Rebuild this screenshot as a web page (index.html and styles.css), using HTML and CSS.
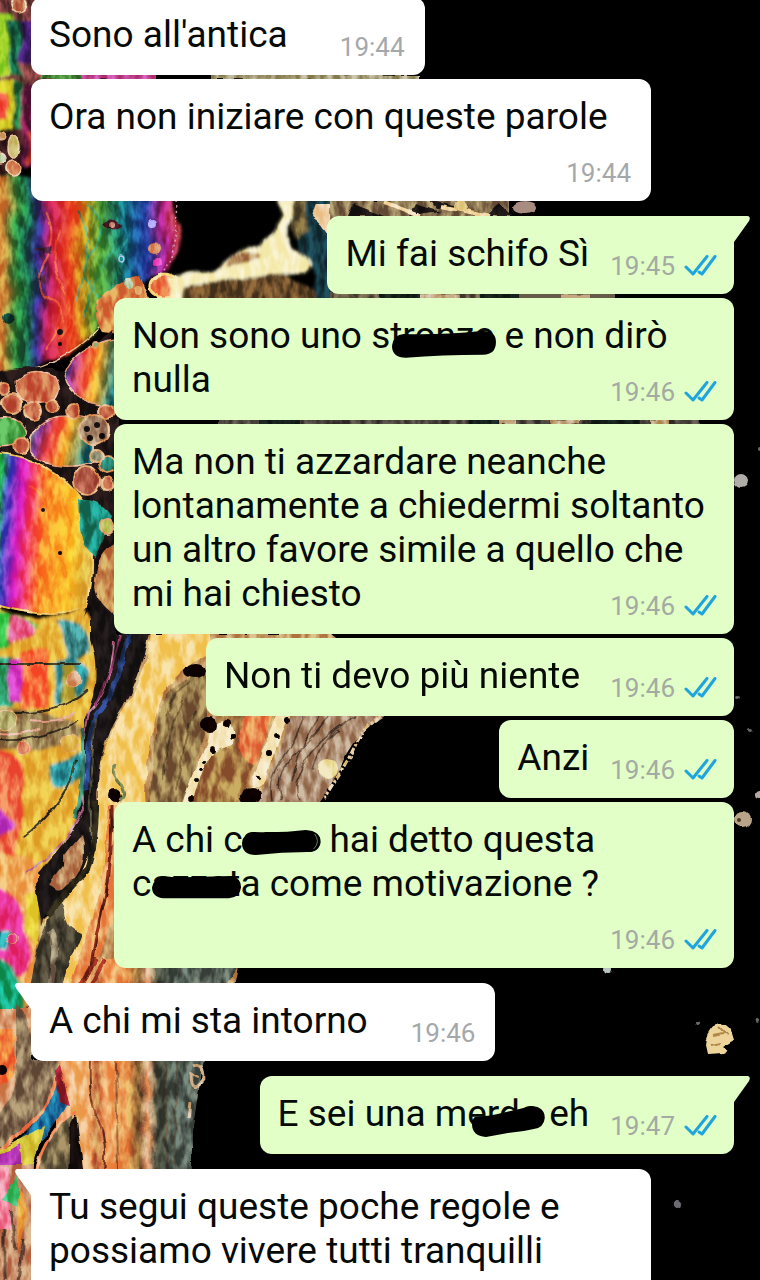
FILE: index.html
```
<!DOCTYPE html>
<html lang="it">
<head>
    <meta charset="UTF-8">
    <meta name="viewport" content="width=device-width, initial-scale=1.0">
    <title>Chat</title>
    <link rel="stylesheet" href="styles.css">
</head>
<body>
    <svg class="wallpaper" viewBox="0 0 760 1280" preserveAspectRatio="xMinYMin slice" aria-hidden="true">
        <defs>
            <linearGradient id="rainbow" x1="0" x2="1" y1="0" y2="0">
                <stop offset="0" stop-color="#f58a3c"/>
                <stop offset=".12" stop-color="#d0903c"/>
                <stop offset=".18" stop-color="#2c8a3c"/>
                <stop offset=".24" stop-color="#1c6a4c"/>
                <stop offset=".29" stop-color="#2e2a86"/>
                <stop offset=".35" stop-color="#c81e50"/>
                <stop offset=".45" stop-color="#ee4a24"/>
                <stop offset=".52" stop-color="#d0901c"/>
                <stop offset=".6" stop-color="#4c9c34"/>
                <stop offset=".7" stop-color="#127078"/>
                <stop offset=".84" stop-color="#2444a8"/>
                <stop offset=".93" stop-color="#b0207e"/>
                <stop offset="1" stop-color="#d4504a"/>
            </linearGradient>
            <linearGradient id="neon" x1="0" x2="1" y1="0" y2=".12">
                <stop offset="0" stop-color="#3ed838"/>
                <stop offset=".12" stop-color="#22b050"/>
                <stop offset=".2" stop-color="#4a48c8"/>
                <stop offset=".32" stop-color="#d81ec0"/>
                <stop offset=".44" stop-color="#f5486a"/>
                <stop offset=".56" stop-color="#f98a2c"/>
                <stop offset=".85" stop-color="#fbc62c"/>
                <stop offset="1" stop-color="#e0b440"/>
            </linearGradient>
            <linearGradient id="drop" x1="0" x2="1" y1="0" y2=".2">
                <stop offset="0" stop-color="#3a9a5c"/>
                <stop offset=".2" stop-color="#8a3a9c"/>
                <stop offset=".4" stop-color="#ee4a48"/>
                <stop offset=".65" stop-color="#f5b030"/>
                <stop offset="1" stop-color="#14707c"/>
            </linearGradient>
            <linearGradient id="sand" gradientUnits="userSpaceOnUse" x1="56" x2="200" y1="0" y2="0">
                <stop offset="0" stop-color="#e87c48"/>
                <stop offset=".12" stop-color="#f2bc80"/>
                <stop offset=".24" stop-color="#f0b070"/>
                <stop offset=".28" stop-color="#c07040"/>
                <stop offset=".34" stop-color="#f2a868"/>
                <stop offset=".5" stop-color="#e89850"/>
                <stop offset=".58" stop-color="#7c5830"/>
                <stop offset=".64" stop-color="#f0b488"/>
                <stop offset=".7" stop-color="#4a4c3c"/>
                <stop offset=".82" stop-color="#56645a"/>
                <stop offset="1" stop-color="#5c665c"/>
            </linearGradient>
            <filter id="wave" x="-5%" y="-5%" width="110%" height="110%">
                <feTurbulence type="fractalNoise" baseFrequency=".03" numOctaves="2" seed="4"/>
                <feDisplacementMap in="SourceGraphic" scale="14" xChannelSelector="R" yChannelSelector="G"/>
                <feGaussianBlur stdDeviation="1.4"/>
            </filter>
            <filter id="ripple" x="-5%" y="-5%" width="110%" height="110%">
                <feTurbulence type="fractalNoise" baseFrequency=".06" numOctaves="2" seed="9"/>
                <feDisplacementMap in="SourceGraphic" scale="6" xChannelSelector="R" yChannelSelector="G"/>
                <feGaussianBlur stdDeviation=".7"/>
            </filter>
            <filter id="mottle" x="0" y="0" width="100%" height="100%" color-interpolation-filters="sRGB">
                <feTurbulence type="fractalNoise" baseFrequency=".12 .05" numOctaves="3" seed="21" result="noise"/>
                <feColorMatrix values="3 0 0 0 -1.05  3 0 0 0 -1.05  3 0 0 0 -1.05  0 0 0 0 1"/>
                <feComposite in2="SourceGraphic" operator="in"/>
            </filter>
        </defs>
        <rect width="760" height="1280" fill="#000"/>

        <!-- top left oil film -->
        <g filter="url(#wave)">
            <path d="M-20-20H60V90H-20Z" fill="#7a3c3c"/>
            <path d="M-20 14H14V80H-20Z" fill="#a0d42c"/>
            <path d="M8 20H20V80H8Z" fill="#186a48"/>
            <path d="M20 20H50V64H20Z" fill="#3e1a66"/>
            <path d="M-20 84H14V130H-20Z" fill="#d8d02c"/>
            <path d="M-20 94H6V118H-20Z" fill="#f0503c"/>
            <path d="M12 84H20V130H12Z" fill="#1e7a44"/>
            <path d="M20 84H44V166H20Z" fill="#7a1c4c"/>
            <path d="M-20 130H20V178H-20Z" fill="#3a1c1c"/>
            <path d="M26 132H44V164H26Z" fill="#b83828"/>
            <path d="M-20 178Q90 168 168 190Q190 236 168 272Q120 290 104 324Q62 372 0 372H-20Z" fill="url(#rainbow)"/>
        </g>
        <g fill="none" stroke="#e8c8a0" stroke-width="1.5" filter="url(#ripple)">
            <path d="M174 196Q184 244 160 276" stroke="#dcaec4" stroke-dasharray="2 3"/>
            <path d="M0 374Q60 370 98 328T140 300"/>
            <ellipse cx="14" cy="147" rx="6" ry="11" fill="#c8b868"/>
            <circle cx="0" cy="158" r="6" fill="#a8c088"/>
            <circle cx="13" cy="168" r="7" fill="#d88a5c"/>
            <circle cx="19" cy="4" r="8" fill="#c47a54"/>
            <circle cx="1" cy="137" r="4" fill="#d8b088"/>
        </g>
        <g filter="url(#ripple)">
            <g fill="none" stroke="#2aa088" stroke-opacity=".6" stroke-width="2">
                <path d="M88 206Q112 224 92 252T104 300M108 202Q128 232 112 252T84 318M128 240Q112 262 122 276M78 210Q98 248 76 300"/>
            </g>
            <g fill="none" stroke="#f57038" stroke-opacity=".7" stroke-width="2">
                <path d="M46 212Q58 236 44 262T52 300T46 350M60 230Q48 260 64 290T58 340"/>
            </g>
            <path d="M102 224Q112 212 122 226Q112 232 102 224Z" fill="#4c1c28"/>
            <circle cx="112" cy="224" r="3" fill="#d09080"/>
            <circle cx="152" cy="223" r="4" fill="#bcb4ff"/>
            <circle cx="154" cy="249" r="6" fill="#e09a70"/>
            <circle cx="157" cy="262" r="4" fill="#f04ac0"/>
            <circle cx="122" cy="259" r="3" fill="none" stroke="#9cb8e0" stroke-width="1.5"/>
            <path d="M32 250L52 246L50 254ZM38 278L46 272L44 284Z" fill="#4c2438"/>
            <circle cx="8" cy="318" r="6" fill="#0a4030"/>
            <path d="M98 300Q110 288 126 280L140 276L150 300H120V334L102 332Q92 316 98 300Z" fill="#dc8848"/>
            <circle cx="128" cy="284" r="5" fill="#b0c8a0"/><circle cx="138" cy="290" r="4" fill="#e8c090"/>
            <ellipse cx="165" cy="286" rx="15" ry="12" fill="#e8683c" stroke="#f8d880" stroke-width="3"/>
        </g>

        <!-- pale branch under the second bubble -->
        <g filter="url(#wave)">
            <path d="M300 196H336V306H300Q330 280 306 262Q290 240 300 196Z" fill="#173a44"/>
            <path d="M276 190H294Q300 214 290 226Q284 238 296 250Q316 262 306 274L240 284Q200 288 186 306H168Q176 286 168 276L214 270Q232 248 262 246Q276 228 284 214Z" fill="#f7efc0"/>
            <path d="M188 288Q236 274 292 278L316 290V306H180Z" fill="#6c4e2c"/>
            <path d="M226 262Q234 248 262 252Q248 264 226 266Z" fill="#b48a5c"/>
            <path d="M294 200H306V230L296 238Q290 228 296 216Z" fill="#6c5c34"/>
        </g>
        <g filter="url(#ripple)">
            <path d="M316 204H340V236H330Q322 222 312 216Z" fill="#f0d0a8"/>
            <path d="M330 200H510V222H330Z" fill="#8e7854"/>
            <path d="M352 204L384 216H348ZM416 204L440 212L410 216ZM500 204L512 216H486ZM430 200L460 206L436 208Z" fill="#1c1414"/>
            <path d="M384 202L420 216M440 206L490 216" stroke="#f4dcae" stroke-width="4"/>
            <circle cx="461" cy="206" r="6" fill="#e8d49c"/><ellipse cx="525" cy="207" rx="12" ry="6" fill="#a88c80"/>
            <path d="M330 292H615V302H330Z" fill="#655a44"/>
            <path d="M220 418H700V428H220Z" fill="#4c443c"/>
            <path d="M380 292H420V302H380ZM480 292H520V302H480ZM260 418H300V428H260ZM470 418H510V428H470ZM590 418H640V428H590Z" fill="#16201c"/>
            <path d="M420 297H460M560 297H590M500 422H516M550 422H580M650 422H670" stroke="#c4a880" stroke-width="5"/>
        </g>
        <g filter="url(#ripple)" stroke-width="6">
            <path d="M40 76L80 78" stroke="#4c8c3c"/>
            <path d="M80 76L156 78" stroke="#c44a98"/>
            <path d="M212 76L420 78" stroke="#a8a07c"/>
        </g>

        <!-- bubbles in the middle left -->
        <g filter="url(#ripple)">
            <path d="M-10 374Q40 360 66 374L112 330L130 600H-10Z" fill="#241414"/>
            <path d="M64 376Q74 346 120 338V406Q76 408 64 376Z" fill="url(#drop)" stroke="#e8b090" stroke-width="1.5"/>
            <path d="M30 438Q40 416 66 416H82Q96 420 94 462Q52 474 30 452Z" fill="url(#drop)" stroke="#e8b090" stroke-width="1.5"/>
            <path d="M-10 420Q22 412 26 434Q20 450-10 446Z" fill="#4ea84c" stroke="#e8b090" stroke-width="1.5"/>
            <path d="M16 380Q34 366 56 378Q64 392 52 402Q30 406 18 396Z" fill="#d0704c" stroke="#e8b090" stroke-width="1.5"/>
            <path d="M-10 452Q50 456 82 500Q100 560 86 606Q60 622 0 606H-10Z" fill="url(#neon)" stroke="#f0cc70" stroke-width="2"/>
            <path d="M78 500Q100 498 112 516L96 556Q84 550 80 530Z" fill="#1e8e7c"/>
            <path d="M28 486Q50 496 46 520T60 560T44 600M60 490Q74 520 66 550T74 600M40 470Q64 490 62 520" fill="none" stroke="#f8a030" stroke-opacity=".6" stroke-width="2"/>
        </g>
        <g fill="#c86848" stroke="#e4ac78" stroke-width="2" filter="url(#ripple)">
            <circle cx="12" cy="404" r="10"/><circle cx="33" cy="411" r="9"/><circle cx="53" cy="406" r="6"/>
            <circle cx="73" cy="411" r="7"/><circle cx="107" cy="411" r="8"/><circle cx="21" cy="446" r="7"/>
            <circle cx="94" cy="430" r="15" fill="#a8886c"/><circle cx="86" cy="480" r="14" fill="#b45c48"/>
            <circle cx="108" cy="464" r="9" fill="#2a8874"/><circle cx="107" cy="484" r="6"/>
            <circle cx="107" cy="526" r="7" fill="#c0c460"/><circle cx="97" cy="456" r="6" fill="#8c8c70"/>
            <circle cx="96" cy="345" r="3" fill="#8cc088"/><circle cx="4" cy="388" r="6"/>
        </g>
        <g fill="#181010">
            <circle cx="87" cy="429" r="3"/><circle cx="97" cy="425" r="3"/><circle cx="90" cy="438" r="3"/><circle cx="102" cy="436" r="3"/>
            <circle cx="60" cy="553" r="2"/><circle cx="43" cy="510" r="2"/><circle cx="60" cy="332" r="3"/><circle cx="60" cy="344" r="2"/>
        </g>

        <!-- lower left colour pool -->
        <g filter="url(#wave)">
            <path d="M-20 600Q60 630 82 600Q104 640 96 700L88 770Q96 810 60 850Q36 876 0 900H-20Z" fill="#e8b83c"/>
            <path d="M-20 612Q24 606 38 624Q30 644-20 650Z" fill="#38c84c"/>
            <path d="M12 612Q40 616 34 636L10 644Z" fill="#e85c8c"/>
            <path d="M58 620Q84 612 90 650L70 666Z" fill="#3c8c8c"/>
            <path d="M-20 656H12V706H-20Z" fill="#30a878"/>
            <path d="M8 658H24V700H8Z" fill="#d83cc8"/>
            <path d="M22 652H48V708H22Z" fill="#f8703c"/>
            <path d="M54 664Q76 650 88 670Q88 700 56 706Z" fill="#2a98a0"/>
            <path d="M62 664H74V704H62Z" fill="#c0b040"/>
            <path d="M-20 706Q60 708 84 730L72 748H-20Z" fill="#a08858"/>
            <path d="M-20 744Q16 744 24 780L14 870H-20Z" fill="#f0704c"/>
            <path d="M52 766L82 752Q84 790 56 788Z" fill="#2a949c"/>
            <path d="M-20 804Q12 810 14 826L-20 850Z" fill="#c43cc8"/>
            <path d="M-20 856Q20 846 44 868L38 990Q20 1030-20 1020Z" fill="#f0b060"/>
            <path d="M-20 884Q24 890 26 930L28 970Q0 990-20 950Z" fill="#e8308c"/>
            <path d="M26 896L44 890L36 950L26 930Z" fill="#e8d43c"/>
            <path d="M-20 930H10V950H-20Z" fill="#2ca0a8"/>
            <path d="M-20 950Q14 956 24 990L22 1010Q0 1024-20 1014Z" fill="#18a878"/>
        </g>
        <g filter="url(#ripple)">
            <path d="M90 590L116 600V634H160Q140 680 136 716Q106 740 100 800Q104 850 84 880Q50 910 42 920L36 884Q60 850 78 822Q86 740 84 720Q104 680 90 640Z" fill="#1c1614"/>
            <path d="M94 586Q98 546 120 540V620Q96 604 94 586Z" fill="#c88a50"/>
            <path d="M84 616Q100 570 94 560Q110 545 116 530L118 524V536Q92 556 92 600Z" fill="#181010"/>
            <path d="M114 640Q112 690 88 712Q78 760 84 810Q64 850 24 874" fill="none" stroke="#c88aa4" stroke-width="2"/>
            <path d="M128 634Q118 690 96 714Q86 750 86 790" fill="none" stroke="#283c78" stroke-width="5"/>
            <path d="M120 634Q112 676 94 706" fill="none" stroke="#8c3464" stroke-width="2"/>
            <path d="M82 728Q86 780 76 820" fill="none" stroke="#3c8c74" stroke-width="4"/>
            <path d="M96 720Q86 800 92 850" fill="none" stroke="#5c5840" stroke-width="2"/>
            <path d="M0 712Q60 718 88 690M0 740Q40 742 78 720M0 664H80M76 760Q66 806 24 836" fill="none" stroke="#383020" stroke-width="2"/>
            <path d="M30 720Q60 724 76 712M0 734Q20 736 40 728" fill="none" stroke="#e8b0a0" stroke-width="2"/>
            <g fill="#d87858" stroke="#f0b888"><circle cx="6" cy="720" r="11" fill="#a8a060"/><circle cx="24" cy="748" r="7"/><circle cx="70" cy="744" r="9" fill="#e0b850"/><circle cx="74" cy="680" r="8" fill="#d8a078"/><circle cx="12" cy="938" r="5" fill="#e84c98"/></g>
            <path d="M150 634H330L420 700V790L336 806Q260 900 238 968L230 1004H60L40 1000Q22 1000 44 920Q92 880 98 810Q94 750 120 712Q140 680 150 634Z" fill="#c69a64"/>
            <path d="M152 634H212V652Q168 670 156 716Q142 780 146 806H120V880L90 980 66 1010Q44 1020 40 990L46 920Q92 880 98 810Q96 750 122 712Q144 680 152 634Z" fill="#f5d27c"/>
            <path d="M108 806H120V900L84 1000H66Q84 940 98 900Q108 860 108 806Z" fill="#ec9c5c"/>
            <path d="M158 716Q166 680 208 674V720L184 804H148Q154 760 158 716Z" fill="#94784c"/>
            <path d="M166 716Q170 696 190 682M162 780Q166 740 182 700M176 790Q184 740 196 710" fill="none" stroke="#685430" stroke-width="2"/>
            <path d="M218 712H276L238 804H190Z" fill="#a87c44"/>
            <path d="M244 712H274L256 764Q230 760 244 716Z" fill="#e88850"/>
            <path d="M290 712H390L320 804H256Q280 760 290 716Z" fill="#b09074"/>
            <path d="M304 716Q296 740 282 760T272 800M330 716Q306 746 290 760T282 800M356 716Q316 740 304 764T300 800M320 716Q300 744 292 780M340 730Q320 740 312 770" fill="none" stroke="#685040" stroke-width="1.5"/>
            <path d="M222 720Q240 724 234 744L214 752Q198 776 192 804H182Q196 762 206 746L210 728Z" fill="#f4e4b8"/>
            <path d="M276 712H290Q274 756 264 784L250 788Q262 750 276 716Z" fill="#f4e4b8"/>
            <path d="M392 712Q350 734 340 770L318 804H430V712Z" fill="#000"/>
            <path d="M380 716L362 732L350 756L338 776L324 798" fill="none" stroke="#e4c898" stroke-width="3" stroke-dasharray="7 2 3 2"/>
            <circle cx="328" cy="769" r="10" fill="#ecdc9c"/>
            <path d="M46 926Q58 890 64 910Q64 930 82 934Q76 950 66 972L54 1010H28Q30 970 46 926Z" fill="#4c4434"/>
            <path d="M50 930Q58 940 50 990" fill="none" stroke="#908068" stroke-width="6"/>
            <path d="M112 806Q112 880 102 910Q94 940 88 990" fill="none" stroke="#702018" stroke-width="3"/>
            <path d="M82 834Q90 870 66 886Q56 896 46 880Q66 850 82 834Z" fill="#c08c60"/>
            <path d="M38 874L64 842V866L46 888Z" fill="#1c1612"/>
            <path d="M48 916Q64 892 88 870Q96 846 96 800" fill="none" stroke="#2c2818" stroke-width="6"/>
        </g>
        <g fill="#080404" filter="url(#ripple)">
            <ellipse cx="195" cy="671" rx="11" ry="7"/><circle cx="209" cy="725" r="8"/><circle cx="227" cy="723" r="4"/>
            <ellipse cx="251" cy="796" rx="11" ry="9"/><circle cx="115" cy="796" r="7"/><circle cx="287" cy="719" r="3"/>
            <circle cx="277" cy="737" r="3"/><circle cx="269" cy="753" r="3"/><circle cx="259" cy="777" r="2"/>
            <circle cx="233" cy="737" r="3"/><circle cx="212" cy="750" r="3"/><circle cx="205" cy="762" r="2"/><circle cx="201" cy="770" r="2"/>
            <circle cx="197" cy="780" r="2"/><circle cx="191" cy="799" r="3"/>
        </g>
        <path d="M115 764Q110 776 122 786Q128 794 120 800" fill="none" stroke="#7c8854" stroke-width="3" filter="url(#ripple)"/>

        <!-- sand bands at the bottom -->
        <g filter="url(#ripple)">
            <path d="M66 1000L100 960H242Q206 1010 204 1060L192 1130V1290H56V1060Z" fill="url(#sand)"/>
            <path d="M96 960L78 990M104 960L88 990" stroke="#902c1c" stroke-width="4"/>
            <path d="M-10 1008H32V1100Q20 1140-10 1130Z" fill="#d89a70"/>
            <path d="M-10 1030H14V1076Q0 1090-10 1080Z" fill="#f0803c"/>
            <path d="M16 1004Q34 1020 32 1060H60V1090Q30 1140-10 1150V1120Q20 1100 16 1060Z" fill="#8c7458"/>
            <path d="M62 1054Q56 1100 34 1120T0 1150" fill="none" stroke="#f09060" stroke-width="4"/>
            <path d="M60 1080L66 1106 46 1136 34 1150L20 1140Q48 1110 60 1080Z" fill="#1c70a0"/>
            <path d="M56 1070L60 1064L70 1106L60 1104Z" fill="#a02430"/>
            <path d="M0 1150L44 1126L30 1180H-10Z" fill="#d8c83c"/>
            <path d="M-10 1160L20 1144L22 1176H-10Z" fill="#b838b8"/>
            <path d="M36 1176Q48 1128 72 1114L76 1176Z" fill="#7c6c4c"/>
            <path d="M70 1124L76 1114L84 1176H68Z" fill="#120c0c"/>
            <path d="M36 1172Q48 1128 76 1112" fill="none" stroke="#f8a070" stroke-width="3"/>
            <path d="M90 1060Q88 1100 98 1120T104 1172" fill="none" stroke="#803c24" stroke-width="2"/>
            <path d="M116 1060L118 1172M166 1060Q164 1120 168 1172M178 1060Q174 1110 176 1172" fill="none" stroke="#5c3c24" stroke-opacity=".5" stroke-width="2"/>
            <path d="M-10 1164H34V1290H-10Z" fill="#c88c68"/>
            <path d="M-10 1166H10V1230H-10Z" fill="#f088a0"/>
            <path d="M2 1200L18 1176V1206Z" fill="#3cc070"/>
            <path d="M18 1190Q28 1200 28 1220L18 1250Z" fill="#e8a040"/>
            <path d="M10 1210L16 1250M24 1240L18 1280M4 1230V1280" stroke="#70503c" stroke-width="3"/>
            <g fill="none" stroke="#d4b490" stroke-width="3"><path d="M192 1066Q204 1062 204 1080Q190 1096 190 1074L198 1078M190 1104L188 1118"/></g>
        </g>
        <circle cx="2" cy="1070" r="5" fill="#180404"/>

        <!-- grain of the oil -->
        <path class="grain" d="M0 0H440V80H320V200H510V300H700V430H120V634H360L400 700L320 810L240 980L190 1280H0Z" filter="url(#mottle)"/>

        <!-- specks -->
        <g fill="#6a6a70" filter="url(#ripple)">
            <circle cx="741" cy="480" r="7" fill="#b0aca8"/><circle cx="759" cy="448" r="2"/><circle cx="607" cy="970" r="4" fill="#bcc4c0"/>
            <circle cx="697" cy="1024" r="2"/><circle cx="757" cy="1022" r="2"/><circle cx="678" cy="1205" r="4"/>
            <circle cx="743" cy="819" r="8" fill="#b8a488"/><circle cx="740" cy="820" r="2" fill="#483828"/><circle cx="738" cy="698" r="2"/>
            <circle cx="750" cy="730" r="2"/><circle cx="760" cy="795" r="4" fill="#b8a8a0"/>
            <path d="M705 1045Q705 1035 715 1025Q723 1020 731 1030L734 1040L724 1046Q731 1050 723 1053L707 1054Z" fill="#ecd49a"/>
            <path d="M713 1035L723 1033M711 1045L721 1043M719 1027L727 1035" stroke="#b08848" stroke-width="2"/>
        </g>
    </svg>

    <svg class="sprites" aria-hidden="true">
        <symbol id="ticks" viewBox="0 0 34 22">
            <path d="M3 12L10 19L24 1.5M16 17L19 19L32 1.5" fill="none" stroke="#1ea5de" stroke-width="3" stroke-linecap="round" stroke-linejoin="round"/>
        </symbol>
    </svg>

    <main class="chat">
        <div class="message in">Sono all'antica&nbsp;<span class="meta"><time>19:44</time></span></div>
        <div class="message in">Ora non iniziare con queste parole&nbsp;<span class="meta"><time>19:44</time></span></div>
        <div class="message out first">Mi fai schifo Sì<span class="meta"><time>19:45</time><svg class="ticks"><use href="#ticks"/></svg></span></div>
        <div class="message out">Non sono uno s<span class="scribble">tronzo<svg viewBox="-1 -2 106 30"><path d="M12 4Q50 5 90 1Q105 0 105 12Q105 25 92 25Q50 25 14 28Q0 28 0 16Q1 5 12 4Z"/></svg></span> e non dirò nulla<span class="meta"><time>19:46</time><svg class="ticks"><use href="#ticks"/></svg></span></div>
        <div class="message out">Ma non ti azzardare neanche lontanamente a chiedermi soltanto un altro favore simile a quello che mi hai chiesto<span class="meta"><time>19:46</time><svg class="ticks"><use href="#ticks"/></svg></span></div>
        <div class="message out">Non ti devo più niente&nbsp;<span class="meta"><time>19:46</time><svg class="ticks"><use href="#ticks"/></svg></span></div>
        <div class="message out">Anzi<span class="meta"><time>19:46</time><svg class="ticks"><use href="#ticks"/></svg></span></div>
        <div class="message out">A chi c<span class="scribble">azzo<svg viewBox="2 2 78 24"><path d="M12 2Q40 3 64 0Q79 1 79 12Q78 22 66 22Q40 22 14 25Q0 25 0 13Q1 3 12 2Z"/><path d="M73 4Q79 12 72 19" fill="none" stroke="#667a5a"/></svg></span> hai detto questa c<span class="scribble">azzat<svg viewBox="0 1 88 24"><path d="M12 1Q22 3 40 2L78 1Q88 3 88 12Q87 22 76 23H14Q0 23 0 12Q2 3 12 1Z"/></svg></span>a come motivazione ?<span class="meta"><time>19:46</time><svg class="ticks"><use href="#ticks"/></svg></span></div>
        <div class="message in first">A chi mi sta intorno<span class="meta"><time>19:46</time></span></div>
        <div class="message out first">E sei una m<span class="scribble">erda<svg viewBox="-4 0 73 31"><path d="M3 11Q20 10 30 7Q48 3 60 0Q73 1 73 12Q72 22 62 23Q50 26 36 27L14 31Q0 30 0 18Q0 13 3 11Z"/></svg></span> eh<span class="meta"><time>19:47</time><svg class="ticks"><use href="#ticks"/></svg></span></div>
        <div class="message in first last">Tu segui queste poche regole e possiamo vivere tutti tranquilli</div>
    </main>
</body>
</html>
```
FILE: styles.css
```
body {
    margin: 0;
    height: 100vh;
    overflow: hidden;
    position: relative;
    background-color: #000;
    font-family: Roboto, sans-serif;
}
.wallpaper {
    position: absolute;
    top: 0;
    left: 0;
    width: 100%;
    height: 100%;
}
.grain {
    mix-blend-mode: overlay;
    opacity: 0.4;
}
.sprites {
    position: absolute;
    width: 0;
    height: 0;
}
.chat {
    position: relative;
    display: flex;
    flex-direction: column;
    gap: 4px;
    margin-top: -3px;
    padding: 0 26px 0 31px;
}
.message {
    position: relative;
    display: flow-root;
    box-sizing: border-box;
    max-width: 620px;
    padding: 16px 17px 13px 18px;
    border-radius: 12px;
    color: #060a06;
    font-size: 37px;
    line-height: 44px;
}
.in {
    align-self: flex-start;
    padding-right: 20px;
    background-color: #fff;
}
.out {
    align-self: flex-end;
    background-color: #e1ffc7;
}
.first {
    margin-top: 11px;
}
.last {
    padding-bottom: 64px;
}
.first::before {
    content: "";
    position: absolute;
    top: 0;
    width: 28px;
    height: 26px;
    background-color: inherit;
}
.in.first::before {
    left: -16px;
    clip-path: path("M28 0H2Q-1 1 1 5L16 26H28Z");
}
.out.first::before {
    right: -16px;
    clip-path: path("M0 0H26Q29 1 27 5L12 26H0Z");
}
.meta {
    float: right;
    display: flex;
    align-items: center;
    gap: 8px;
    margin: 19px 0 0 21px;
    color: #a4aaa4;
    font-size: 26px;
    line-height: 30px;
}
.in .meta {
    margin-left: 43px;
    color: #a5a8ab;
}
.ticks {
    width: 34px;
    height: 22px;
}
.scribble {
    position: relative;
}
.scribble svg {
    position: absolute;
    top: 14px;
    left: 1px;
    width: 100%;
    overflow: visible;
}
```
